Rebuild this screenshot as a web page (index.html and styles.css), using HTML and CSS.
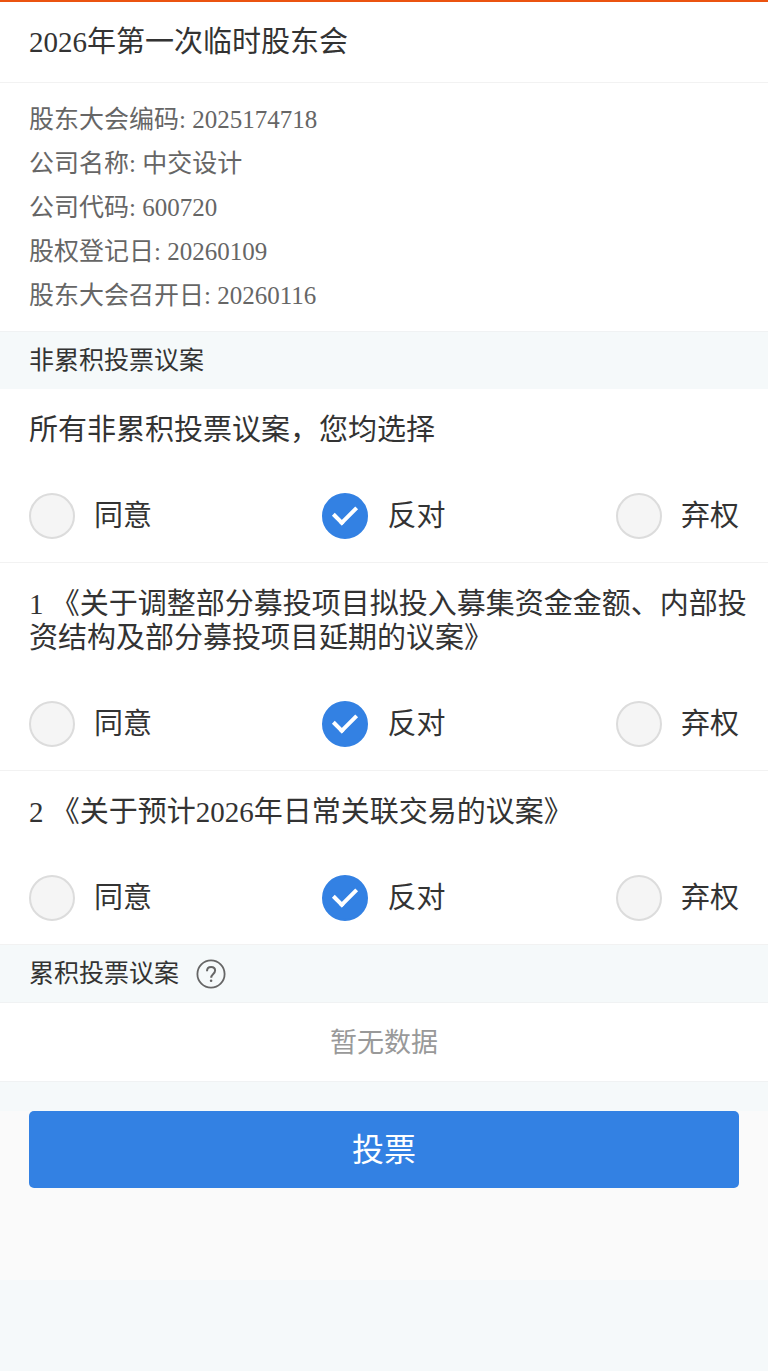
FILE: index.html
```
<!DOCTYPE html>
<html lang="zh-CN">
<head>
    <meta charset="UTF-8">
    <meta name="viewport" content="width=device-width, initial-scale=1.0">
    <title>股东会投票</title>
    <link rel="stylesheet" href="styles.css">
</head>
<body>
    <header class="header">
        <h1>2026年第一次临时股东会</h1>
    </header>
    <ul class="meeting-info">
        <li>股东大会编码: 2025174718</li>
        <li>公司名称: 中交设计</li>
        <li>公司代码: 600720</li>
        <li>股权登记日: 20260109</li>
        <li>股东大会召开日: 20260116</li>
    </ul>
    <form class="vote-form">
        <h2 class="section-title">非累积投票议案</h2>
        <div class="proposal" role="radiogroup" aria-labelledby="title-all">
            <h3 id="title-all">所有非累积投票议案，您均选择</h3>
            <div class="options">
                <label><input type="radio" name="all" value="agree">同意</label>
                <label><input type="radio" name="all" value="against" checked>反对</label>
                <label><input type="radio" name="all" value="abstain">弃权</label>
            </div>
        </div>
        <div class="proposal" role="radiogroup" aria-labelledby="title-1">
            <h3 id="title-1">1 《关于调整部分募投项目拟投入募集资金金额、内部投资结构及部分募投项目延期的议案》</h3>
            <div class="options">
                <label><input type="radio" name="proposal-1" value="agree">同意</label>
                <label><input type="radio" name="proposal-1" value="against" checked>反对</label>
                <label><input type="radio" name="proposal-1" value="abstain">弃权</label>
            </div>
        </div>
        <div class="proposal" role="radiogroup" aria-labelledby="title-2">
            <h3 id="title-2">2 《关于预计2026年日常关联交易的议案》</h3>
            <div class="options">
                <label><input type="radio" name="proposal-2" value="agree">同意</label>
                <label><input type="radio" name="proposal-2" value="against" checked>反对</label>
                <label><input type="radio" name="proposal-2" value="abstain">弃权</label>
            </div>
        </div>
        <h2 class="section-title with-help">
            累积投票议案
            <button class="help" type="button" aria-label="帮助">
                <svg viewBox="0 0 30 30" width="30" height="30" fill="none" stroke="#666" stroke-width="2">
                    <circle cx="15" cy="15" r="13.6" stroke-width="1.8"/>
                    <path d="M11 12.2C11 9.4 12.7 8 15.1 8c2.3 0 4 1.4 4 3.6 0 3.2-3.9 3.6-3.9 7.2"/>
                    <circle cx="15.1" cy="21.7" r="1.3" fill="#666" stroke="none"/>
                </svg>
            </button>
        </h2>
        <p class="empty">暂无数据</p>
        <div class="submit-area">
            <button class="submit" type="submit">投票</button>
        </div>
    </form>
</body>
</html>
```
FILE: styles.css
```
* {
    box-sizing: border-box;
}
body {
    margin: 0;
    border-top: 2px solid #eb5310;
    background-color: #f5f9fa;
    color: #333;
    font-family: "Liberation Serif", "Noto Sans CJK SC", serif;
    font-size: 29px;
}
h1, h2, h3, p, ul {
    margin: 0;
    padding: 0;
    font-weight: normal;
}
.header {
    padding: 20px 29px;
    background-color: #fff;
    border-bottom: 1px solid #f2f2f2;
}
h1 {
    font-size: 29px;
    line-height: 40px;
}
.meeting-info {
    padding: 15px 29px 13px;
    background-color: #fff;
    border-bottom: 1px solid #f0f2f3;
    color: #666;
    font-size: 25px;
    line-height: 44px;
    list-style: none;
}
.section-title {
    padding: 0 29px;
    font-size: 25px;
    line-height: 57px;
}
.proposal {
    padding: 24px 29px 23px;
    background-color: #fff;
    border-bottom: 1px solid #f2f2f2;
}
/* long titles may run a little into the right gutter */
.proposal h3 {
    margin-right: -10px;
    font-size: 29px;
    line-height: 34px;
}
.options {
    display: flex;
    justify-content: space-between;
    margin-top: 46px;
}
.options label {
    display: flex;
    align-items: center;
    gap: 19px;
    line-height: 46px;
    cursor: pointer;
}
.options input {
    appearance: none;
    display: flex;
    justify-content: center;
    width: 46px;
    height: 46px;
    margin: 0;
    border: 2px solid #dcdcdc;
    border-radius: 50%;
    background-color: #f5f5f5;
    cursor: pointer;
}
.options input:checked {
    border-color: #3381e3;
    background-color: #3381e3;
}
.options input:checked::before {
    content: "";
    box-sizing: border-box;
    width: 14px;
    height: 23px;
    margin-top: 6px;
    border: solid #fff;
    border-width: 0 4px 4px 0;
    transform: rotate(45deg);
}
.with-help {
    display: flex;
    align-items: center;
    gap: 17px;
    border-bottom: 1px solid #f0f2f3;
}
.help {
    display: flex;
    padding: 0;
    border: none;
    background: none;
    cursor: pointer;
}
.empty {
    padding: 20px 29px 18px;
    background-color: #fff;
    border-bottom: 1px solid #f0f2f3;
    color: #999;
    font-size: 27px;
    line-height: 40px;
    text-align: center;
}
.submit-area {
    margin-top: 29px;
    padding: 0 29px 92px;
    background-color: #fafafa;
}
.submit {
    display: block;
    width: 100%;
    padding: 19px 18px 17px;
    border: none;
    border-radius: 5px;
    background-color: #3381e3;
    color: #fff;
    font-family: inherit;
    font-size: 32px;
    line-height: 41px;
    cursor: pointer;
}
```
